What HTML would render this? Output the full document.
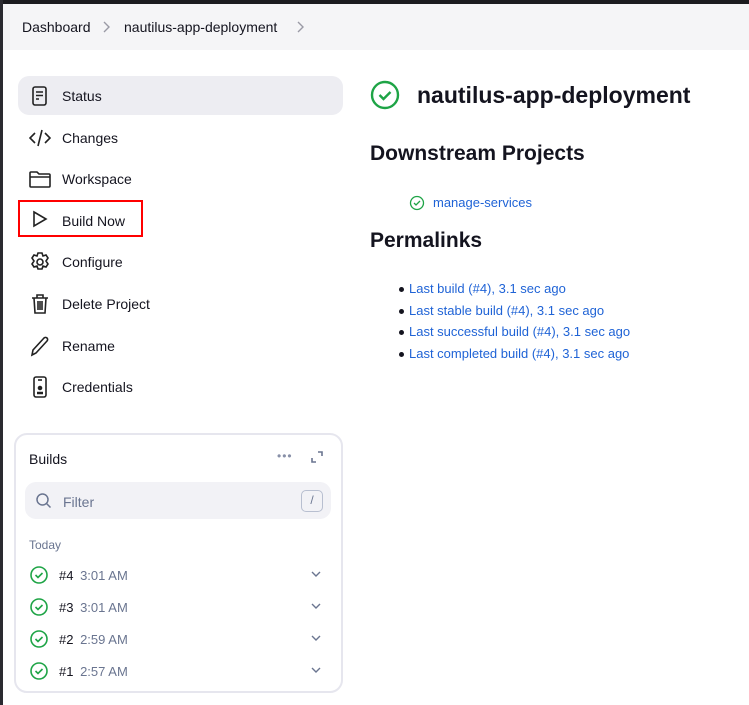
<!DOCTYPE html>
<html><head><style>
*{margin:0;padding:0;box-sizing:border-box}
body{width:749px;height:705px;background:#fff;font-family:"Liberation Sans",sans-serif;color:#14141f;position:relative;overflow:hidden}
.abs{position:absolute}
.topb{left:0;top:0;width:749px;height:4px;background:#1b1b1f}
.leftb{left:0;top:0;width:3px;height:705px;background:#2a2a30}
.crumb{left:3px;top:4px;width:746px;height:46px;background:#f5f5f7;font-size:14px}
.crumb span{position:absolute;top:15px}
.item{left:18px;width:325px;height:40px;font-size:14px}
.item .t{position:absolute;left:44px;top:12px}
.item svg{position:absolute;left:11px;top:9px}
a{color:#1f63d6;text-decoration:none}
.card{left:14px;top:433px;width:329px;height:260px;border:2px solid #e6e6ee;border-radius:13px}
.pl div{height:21.7px;line-height:21.7px;position:relative;padding-left:13px}
.pl div:before{content:"";position:absolute;left:3px;top:9px;width:5px;height:5px;border-radius:50%;background:#14141f}
</style></head><body>
<div class="abs topb"></div><div class="abs leftb"></div>
<div class="abs crumb"><span style="left:19px">Dashboard</span>
<svg class="abs" style="left:99px;top:17px" width="8" height="12" viewBox="0 0 8 12" fill="none" stroke="#9a9aa5" stroke-width="1.4"><path d="M2 1l5 5-5 5"/></svg>
<span style="left:121px">nautilus-app-deployment</span>
<svg class="abs" style="left:293px;top:17px" width="8" height="12" viewBox="0 0 8 12" fill="none" stroke="#9a9aa5" stroke-width="1.4"><path d="M2 1l5 5-5 5"/></svg></div>

<div class="abs item" style="top:76px;background:#ededf2;border-radius:11px;height:39px"><svg width="22" height="22" viewBox="0 0 22 22" fill="none" stroke="#222" stroke-width="1.6"><rect x="4" y="2" width="13" height="18" rx="2"/><path d="M7 7h7M7 10.5h7M7 14h3"/></svg><span class="t">Status</span></div>
<div class="abs item" style="top:118px"><svg width="22" height="22" viewBox="0 0 22 22" fill="none" stroke="#222" stroke-width="1.6"><path d="M6 6l-5 5 5 5M16 6l5 5-5 5M13 3l-4 16"/></svg><span class="t">Changes</span></div>
<div class="abs item" style="top:159px"><svg width="22" height="22" viewBox="0 0 22 22" fill="none" stroke="#222" stroke-width="1.6"><path d="M1 5a1 1 0 011-1h6l2 2h10a1 1 0 011 1v11a1 1 0 01-1 1H2a1 1 0 01-1-1z M1 9h20"/></svg><span class="t">Workspace</span></div>
<div class="abs item" style="top:200px;width:125px;height:37px;border:2px solid #f00"><svg width="22" height="22" viewBox="0 0 22 22" fill="none" stroke="#222" stroke-width="1.6" style="left:9px;top:6px"><path d="M5 4l12 7-12 7z"/></svg><span class="t" style="left:42px;top:11px">Build Now</span></div>
<div class="abs item" style="top:242px"><svg width="22" height="22" viewBox="0 0 22 22" fill="none" stroke="#222" stroke-width="1.6"><circle cx="11" cy="11" r="3"/><path d="M9 2h4l1 3 3-1 2 3-2 3 2 3-2 3-3-1-1 3H9l-1-3-3 1-2-3 2-3-2-3 2-3 3 1z"/></svg><span class="t">Configure</span></div>
<div class="abs item" style="top:284px"><svg width="22" height="22" viewBox="0 0 22 22" fill="none" stroke="#222" stroke-width="1.6"><path d="M3 5h16M8 5V2h6v3M5 5l1 15h10l1-15M9 8v9M11 8v9M13 8v9"/></svg><span class="t">Delete Project</span></div>
<div class="abs item" style="top:326px"><svg width="22" height="22" viewBox="0 0 22 22" fill="none" stroke="#222" stroke-width="1.6"><path d="M3 20l1-5L15 3a2 2 0 013 3L7 18z"/></svg><span class="t">Rename</span></div>
<div class="abs item" style="top:367px"><svg width="22" height="22" viewBox="0 0 22 22" fill="none" stroke="#222" stroke-width="1.6"><rect x="5" y="1" width="12" height="20" rx="2"/><path d="M9 4h4"/><circle cx="11" cy="12" r="1.5" fill="#222"/><path d="M8 17h6" stroke-width="2.5"/></svg><span class="t">Credentials</span></div>

<div class="abs card"></div>
<div class="abs" style="left:29px;top:451px;font-size:14px">Builds</div>
<div class="abs" style="left:277px;top:449px;font-size:12px;color:#8890a8;letter-spacing:1px">•••</div>
<svg class="abs" style="left:310px;top:450px" width="14" height="14" viewBox="0 0 14 14" fill="none" stroke="#6a7590" stroke-width="1.6"><path d="M8 2h4v4M6 12H2V8"/></svg>
<div class="abs" style="left:25px;top:482px;width:306px;height:37px;background:#f2f2f6;border-radius:11px"></div>
<svg class="abs" style="left:35px;top:492px" width="18" height="18" viewBox="0 0 18 18" fill="none" stroke="#6a7590" stroke-width="1.5"><circle cx="7.5" cy="7.5" r="5.5"/><path d="M11.5 11.5l4 4"/></svg>
<div class="abs" style="left:63px;top:494px;font-size:14px;color:#6a7590">Filter</div>
<div class="abs" style="left:301px;top:490px;width:22px;height:22px;border:1.5px solid #b8bfd0;border-radius:5px;font-size:12px;color:#6a7590;text-align:center;line-height:19px">/</div>
<div class="abs" style="left:29px;top:538px;font-size:12px;color:#6a7590">Today</div>
<div class="abs" style="left:29px;top:565px"><svg width="20" height="20" viewBox="0 0 20 20" fill="none" stroke="#1ea446" stroke-width="1.6"><circle cx="10" cy="10" r="8"/><path d="M6.5 10l2.5 2.5 4.5-4.5"/></svg></div>
<div class="abs" style="left:59px;top:568px;font-size:13px">#4 <span style="color:#6a7590;margin-left:3px">3:01 AM</span></div>
<div class="abs" style="left:29px;top:597px"><svg width="20" height="20" viewBox="0 0 20 20" fill="none" stroke="#1ea446" stroke-width="1.6"><circle cx="10" cy="10" r="8"/><path d="M6.5 10l2.5 2.5 4.5-4.5"/></svg></div>
<div class="abs" style="left:59px;top:600px;font-size:13px">#3 <span style="color:#6a7590;margin-left:3px">3:01 AM</span></div>
<div class="abs" style="left:29px;top:629px"><svg width="20" height="20" viewBox="0 0 20 20" fill="none" stroke="#1ea446" stroke-width="1.6"><circle cx="10" cy="10" r="8"/><path d="M6.5 10l2.5 2.5 4.5-4.5"/></svg></div>
<div class="abs" style="left:59px;top:632px;font-size:13px">#2 <span style="color:#6a7590;margin-left:3px">2:59 AM</span></div>
<div class="abs" style="left:29px;top:661px"><svg width="20" height="20" viewBox="0 0 20 20" fill="none" stroke="#1ea446" stroke-width="1.6"><circle cx="10" cy="10" r="8"/><path d="M6.5 10l2.5 2.5 4.5-4.5"/></svg></div>
<div class="abs" style="left:59px;top:664px;font-size:13px">#1 <span style="color:#6a7590;margin-left:3px">2:57 AM</span></div>
<svg class="abs" style="left:310px;top:569px" width="12" height="112" viewBox="0 0 12 112" fill="none" stroke="#6a7590" stroke-width="1.4"><path d="M2 3l4 4 4-4M2 35l4 4 4-4M2 67l4 4 4-4M2 99l4 4 4-4"/></svg>

<svg class="abs" style="left:370px;top:80px" width="30" height="30" viewBox="0 0 30 30" fill="none" stroke="#1ea446" stroke-width="2.4"><circle cx="15" cy="15" r="13"/><path d="M9.5 15l4 4 7-7"/></svg>
<div class="abs" style="left:417px;top:82px;font-size:23px;font-weight:bold">nautilus-app-deployment</div>
<div class="abs" style="left:370px;top:142px;font-size:21px;font-weight:bold">Downstream Projects</div>
<svg class="abs" style="left:409px;top:195px" width="16" height="16" viewBox="0 0 16 16" fill="none" stroke="#1ea446" stroke-width="1.3"><circle cx="8" cy="8" r="6.5"/><path d="M5 8l2 2 4-4"/></svg>
<a class="abs" style="left:433px;top:195px;font-size:13px">manage-services</a>
<div class="abs" style="left:370px;top:229px;font-size:21px;font-weight:bold">Permalinks</div>
<div class="abs pl" style="left:396px;top:278px;font-size:13px">
<div><a>Last build (#4), 3.1 sec ago</a></div>
<div><a>Last stable build (#4), 3.1 sec ago</a></div>
<div><a>Last successful build (#4), 3.1 sec ago</a></div>
<div><a>Last completed build (#4), 3.1 sec ago</a></div>
</div>
</body></html>
